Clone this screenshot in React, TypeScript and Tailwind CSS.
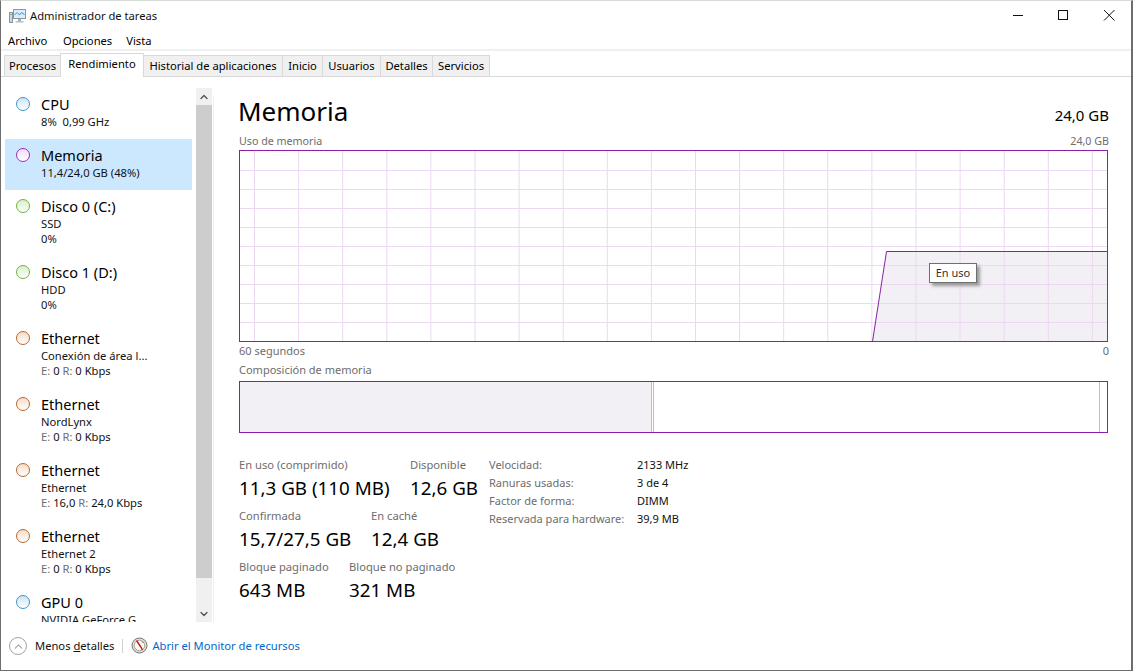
import { ChevronUp, ChevronDown } from 'lucide-react';

const tabs = [
  { name: 'Procesos', w: 'w-[57px]' },
  { name: 'Rendimiento', w: 'w-[84px]', active: true },
  { name: 'Historial de aplicaciones', w: 'w-[140px]' },
  { name: 'Inicio', w: 'w-[41px]' },
  { name: 'Usuarios', w: 'w-[59px]' },
  { name: 'Detalles', w: 'w-[53px]' },
  { name: 'Servicios', w: 'w-[58px]' },
];

const dots = {
  blue: 'border-[#3d94cc] from-[#cfe3f3] to-white',
  purple: 'border-[#9a2fb8] from-[#f3dcf9] to-white',
  green: 'border-[#6fb53c] from-[#d9eecb] to-white',
  orange: 'border-[#b8672e] from-[#f6dcc9] to-white',
};

function Dot({ color }: { color: keyof typeof dots }) {
  return <div className={`w-[14px] h-[14px] rounded-full border-[1.5px] bg-linear-to-b ${dots[color]}`} />;
}

function SidebarItem({ color, name, line2, net, line3, selected }: {
  color: keyof typeof dots; name: string; line2: string; line3?: string; selected?: boolean;
  net?: [string, string];
}) {
  const tall = line3 || net;
  return (
    <div className={`flex shrink-0 pl-[11px] ${tall ? 'h-[66px]' : 'h-[51px]'} ${selected ? 'bg-[#cce8ff]' : ''}`}>
      <div className="mt-[9px]"><Dot color={color} /></div>
      <div className="ml-[11px] pt-[6px] whitespace-pre">
        <div className="text-[14.5px] leading-[20px] text-black">{name}</div>
        <div className="leading-[15px] text-[#111]">{line2}</div>
        {line3 && <div className="leading-[16px] text-[#111]">{line3}</div>}
        {net && (
          <div className="leading-[16px] text-[#111]">
            <span className="text-[#6d6d6d]">E:</span> {net[0]} <span className="text-[#6d6d6d]">R:</span> {net[1]} Kbps
          </div>
        )}
      </div>
    </div>
  );
}

function Stat({ label, value, w }: { label: string; value: string; w: string }) {
  return (
    <div className={w}>
      <div className="leading-[16px] text-[#6d6d6d] whitespace-nowrap">{label}</div>
      <div className="text-[18.8px] leading-[24px] mt-[3px] text-black whitespace-nowrap">{value}</div>
    </div>
  );
}

function MemoryGraph() {
  const vs = Array.from({ length: 20 }, (_, i) => 15.5 + i * 44.1);
  const hs = Array.from({ length: 9 }, (_, i) => 20.5 + i * 19);
  return (
    <svg width="870" height="192" className="block">
      <path d="M633.5 191.5 L647.5 101.5 H868 V191.5 Z" fill="#f2f0f4" />
      {vs.map(x => <line key={x} x1={x} x2={x} y1="0" y2="192" stroke="#ecd8f2" />)}
      {hs.map(y => <line key={y} x1="0" x2="868" y1={y} y2={y} stroke="#ecd8f2" />)}
      <path d="M633.5 191.5 L647.5 101.5 H868" fill="none" stroke="#8b1fa9" />
      <rect x="0.5" y="0.5" width="868" height="191" fill="none" stroke="#8b1fa9" />
    </svg>
  );
}

function AppIcon() {
  return (
    <svg width="17" height="16" viewBox="0 0 17 16">
      <rect x="0.5" y="4.5" width="3" height="10" fill="#d4d8db" stroke="#8b9298" />
      <rect x="1.5" y="6" width="1" height="1" fill="#5aa02c" />
      <rect x="4.5" y="1.5" width="12" height="9" fill="#dcecf8" stroke="#8d979f" />
      <path d="M5.5 7 L8 4.5 L10.5 7 L12.5 4.5 L15.5 6.5" fill="none" stroke="#3f8fd0" />
      <rect x="9" y="11" width="3" height="2" fill="#a5acb2" />
      <rect x="6.5" y="13" width="8" height="1.5" fill="#b8bec3" />
    </svg>
  );
}

function MonitorIcon() {
  return (
    <svg width="17" height="17" viewBox="0 0 17 17">
      <circle cx="8.5" cy="8.5" r="7.5" fill="#dedcd5" stroke="#77766f" />
      <circle cx="8.5" cy="8.5" r="5.2" fill="#fbfbf8" stroke="#a9a8a0" />
      <path d="M5.5 3.5 L9.5 9.5 L11.5 13" fill="none" stroke="#c8201c" strokeWidth="1.5" />
      <path d="M11 4.5 L12.5 6" stroke="#555" />
    </svg>
  );
}

export default function App() {
  return (
    <div className="w-[1133px] h-[671px] overflow-hidden bg-white flex flex-col border-l border-r-2 border-b border-t border-[#6e6e6e] border-t-[#d8dcd8] font-['Noto_Sans',sans-serif] text-[11.2px] text-black">
      {/* title bar */}
      <div className="h-[30px] shrink-0 flex items-center pl-[8px]">
        <AppIcon />
        <span className="ml-[4px] text-[#111]">Administrador de tareas</span>
        <div className="ml-auto flex items-center">
          <svg width="46" height="30" viewBox="0 0 46 30"><path d="M20 14.5 H30" stroke="#111" /></svg>
          <svg width="46" height="30" viewBox="0 0 46 30"><rect x="19.5" y="9.5" width="9" height="9" fill="none" stroke="#111" /></svg>
          <svg width="46" height="30" viewBox="0 0 46 30"><path d="M19 9 L29.5 19.5 M29.5 9 L19 19.5" stroke="#111" /></svg>
        </div>
      </div>
      {/* menu */}
      <div className="h-[16px] shrink-0 flex items-center gap-[14px] pl-[7px] pt-[2px] border-b-2 border-[#f0f0f0] box-content">
        <span className="w-[41px]">Archivo</span>
        <span>Opciones</span>
        <span>Vista</span>
      </div>
      {/* tabs */}
      <div className="h-[26px] shrink-0 flex items-end pl-[3px] border-b border-[#d9d9d9]">
        {tabs.map(t => (
          <div
            key={t.name}
            className={`${t.w} flex justify-center border-l border-t border-r border-[#d9d9d9] -mr-px box-border whitespace-nowrap ${
              t.active ? 'h-[24px] bg-white relative z-10 -mb-px pt-[2px]' : 'h-[21px] bg-[#f0f0f0] pt-[2px]'
            }`}
          >
            {t.name}
          </div>
        ))}
      </div>
      <div className="flex-1 flex min-h-0">
        {/* sidebar */}
        <div className="w-[212px] shrink-0 flex flex-col mt-[11px] h-[534px]">
          <div className="flex h-full">
            <div className="w-[187px] ml-[4px] flex flex-col overflow-hidden">
              <SidebarItem color="blue" name="CPU" line2="8%  0,99 GHz" />
              <SidebarItem color="purple" name="Memoria" line2="11,4/24,0 GB (48%)" selected />
              <SidebarItem color="green" name="Disco 0 (C:)" line2="SSD" line3="0%" />
              <SidebarItem color="green" name="Disco 1 (D:)" line2="HDD" line3="0%" />
              <SidebarItem color="orange" name="Ethernet" line2="Conexión de área l..." net={['0', '0']} />
              <SidebarItem color="orange" name="Ethernet" line2="NordLynx" net={['0', '0']} />
              <SidebarItem color="orange" name="Ethernet" line2="Ethernet" net={['16,0', '24,0']} />
              <SidebarItem color="orange" name="Ethernet" line2="Ethernet 2" net={['0', '0']} />
              <SidebarItem color="blue" name="GPU 0" line2="NVIDIA GeForce G" />
            </div>
            <div className="w-[16px] ml-[4px] bg-[#f0f0f0] flex flex-col items-center">
              <div className="h-[17px] flex items-center"><ChevronUp size={12} strokeWidth={2.5} color="#505050" /></div>
              <div className="h-[473px] w-full bg-[#cdcdcd]" />
              <div className="flex-1 flex items-end pb-[2px]"><ChevronDown size={12} strokeWidth={2.5} color="#505050" /></div>
            </div>
          </div>
        </div>
        {/* main pane */}
        <div className="flex-1 border-l border-[#f0f0f0] mt-[18px] pl-[25px] pr-[23px] flex flex-col h-[527px]">
          <div className="flex items-end justify-between h-[33px] -ml-[1px]">
            <span className="text-[26px] leading-[33px] text-black">Memoria</span>
            <span className="text-[15px] leading-[20px] mb-[3px]">24,0 GB</span>
          </div>
          <div className="flex justify-between h-[16px] mt-[5px] leading-[16px] text-[10.7px] text-[#6d6d6d]">
            <span>Uso de memoria</span>
            <span>24,0 GB</span>
          </div>
          <div className="relative mt-[1px] h-[192px]">
            <MemoryGraph />
            <div className="absolute left-[690px] top-[113px] w-[48px] h-[20px] bg-white border border-[#6e6e6e] shadow-[3px_3px_3px_#9a9a9a] text-center leading-[17px] text-[11px] text-[#333]">En uso</div>
          </div>
          <div className="flex justify-between h-[16px] mt-[1px] leading-[16px] text-[11px] text-[#6d6d6d]">
            <span>60 segundos</span>
            <span>0</span>
          </div>
          <div className="h-[16px] mt-[3px] leading-[16px] text-[11px] text-[#6d6d6d]">Composición de memoria</div>
          <div className="flex h-[52px] mt-[3px] border border-[#8b1fa9] w-[869px]">
            <div className="w-[412px] bg-[#f2f0f4] border-r border-[#cdb4d6]" />
            <div className="w-[1px]" />
            <div className="w-[447px] border-l border-r border-[#cdb4d6]" />
          </div>
          <div className="flex mt-[24px]">
            <div className="w-[250px] flex flex-col gap-[8px]">
              <div className="flex"><Stat label="En uso (comprimido)" value="11,3 GB (110 MB)" w="w-[171px]" /><Stat label="Disponible" value="12,6 GB" w="w-[70px]" /></div>
              <div className="flex"><Stat label="Confirmada" value="15,7/27,5 GB" w="w-[132px]" /><Stat label="En caché" value="12,4 GB" w="w-[70px]" /></div>
              <div className="flex"><Stat label="Bloque paginado" value="643 MB" w="w-[110px]" /><Stat label="Bloque no paginado" value="321 MB" w="w-[120px]" /></div>
            </div>
            <div className="grid grid-cols-[148px_auto] auto-rows-[18px] content-start text-[11px] leading-[16px] text-[#111]">
              <span className="text-[#6d6d6d]">Velocidad:</span><span>2133 MHz</span>
              <span className="text-[#6d6d6d]">Ranuras usadas:</span><span>3 de 4</span>
              <span className="text-[#6d6d6d]">Factor de forma:</span><span>DIMM</span>
              <span className="text-[#6d6d6d]">Reservada para hardware:</span><span>39,9 MB</span>
            </div>
          </div>
        </div>
      </div>
      {/* footer */}
      <div className="h-[49px] shrink-0 flex items-start pt-[16px] pl-[8px]">
        <div className="w-[18px] h-[18px] rounded-full border border-[#a3a3a3] flex items-center justify-center">
          <ChevronUp size={13} color="#a3a3a3" />
        </div>
        <span className="ml-[8px] leading-[18px] text-[#111]">Menos <u>d</u>etalles</span>
        <div className="w-px h-[14px] bg-[#d0d0d0] ml-[8px] mt-[2px]" />
        <div className="ml-[8px]"><MonitorIcon /></div>
        <span className="ml-[4px] leading-[18px] text-[#0066cc]">Abrir el Monitor de recursos</span>
      </div>
    </div>
  );
}
